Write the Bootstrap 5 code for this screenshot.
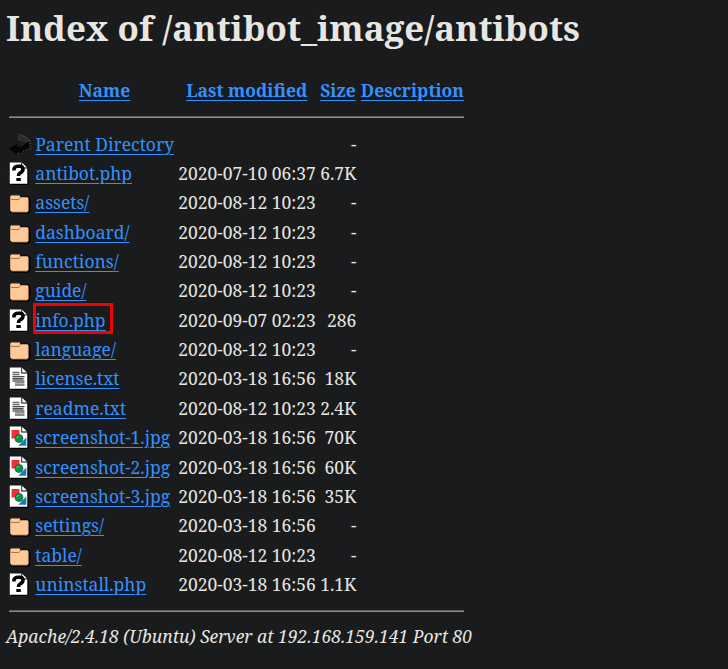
<!DOCTYPE html>
<html lang="en" data-bs-theme="dark">
<head>
<meta charset="utf-8">
<meta name="viewport" content="width=device-width, initial-scale=1">
<title>Index of /antibot_image/antibots</title>
<link href="https://cdn.jsdelivr.net/npm/bootstrap@5.3.0/dist/css/bootstrap.min.css" rel="stylesheet">
<style>
body{background:#1a1b1d;color:#e8e6e1;font-family:"Noto Serif","Droid Serif","DejaVu Serif Condensed","DejaVu Serif",serif;font-size:17.48px;line-height:24px;padding:4px 6px 0;overflow:hidden;white-space:nowrap}
h1{font-size:34.9px;font-weight:700;line-height:48px;color:inherit}
a,a:hover{color:#3391ff;text-decoration:underline;text-decoration-thickness:1px;text-underline-offset:3px}
.listing{width:455px;margin-left:3px}
.heads{padding:26px 0 14px}
.entries{padding:11.07px 0 11.33px}
.entry{height:29.35px}
.c-icon{width:26.3px}.c-name{width:143px}.c-date{width:138px}.c-size{width:40px}.c-desc{width:107.7px}
.heads .c-name{width:142.6px}.heads .c-date{width:137.800px}.heads .c-desc{width:108.3px}
.rule{height:2px;background:linear-gradient(#5c5e60 50%,#8b8b8a 50%)}
.glyph{width:22px;height:24px;display:block;margin-top:2px}
.marked{position:relative}
.marked::after{content:"";position:absolute;left:-2px;top:-5px;width:79.5px;height:31px;border:3px solid #f40000}
.server{margin-top:12px;font-size:17.45px}
</style>
</head>
<body>
<svg class="d-none">
<symbol id="i-back" viewBox="0 0 22 24"><path d="M10 1.500 16 3l5 4v8l-6 4-6 1v2.500L0 15.500 8 11v3l6-1 3-3-7-2z" fill="#040404"/><path d="M10 1.500 16 3l5 4v1.500l-5 1.500-6-2z" fill="#2a2b2d"/><path d="M10 1v7M12 2l4 1.500 4 3.500M21 7.500v8M14 18.500l6-3M9 20v3" stroke="#888" stroke-width=".8" stroke-dasharray="1 1.500" fill="none"/></symbol>
<symbol id="i-page" viewBox="0 0 22 24"><path d="M2 1h12l5.500 6v16H2z" fill="#000"/><path d="M.8.500h11.500V6.500h6v15.200H.8z" fill="#fff"/><path d="M13.200.8 18 5.600h-4.800z" fill="#fff"/></symbol>
<symbol id="i-unknown" viewBox="0 0 22 24"><use href="#i-page"/><path d="M5 8.500V6.700Q6 4.200 9 4.200h2.500Q14 4.500 14 7.500 13.800 9.700 11 11 9.500 12 9.500 14" fill="none" stroke="#000" stroke-width="3.500"/><path d="M7.300 16h4.500v3H7.300z"/></symbol>
<symbol id="i-text" viewBox="0 0 22 24"><use href="#i-page"/><path d="M3.500 5.500h7M3.500 7.700h7M6 15.800h9.500M6 18h9.500" stroke="#666" stroke-width="1.300"/><path d="M3.500 9.800h12M3.500 11.900h11M3.500 14h12" stroke="#111" stroke-width="1.100"/></symbol>
<symbol id="i-image" viewBox="0 0 22 24"><use href="#i-page"/><path d="M2.500 4h8v8.500h-8z" fill="#f12e36"/><path d="M17.300 11.500v8.200h-8z" fill="#1879bf"/><circle cx="10" cy="12.500" r="4" fill="#099444" stroke="#05612b" stroke-width=".7"/><path d="m7.600 12 2-2" stroke="#8fe0a8"/></symbol>
<symbol id="i-folder" viewBox="0 0 22 24"><path d="M2 5.500h17l2.300 2V21l-1.500 1.800H4L1 20.500V6z" fill="#000"/><path d="M2.500 4.200h7.800l1.200 2h7l1 1.200v12.400l-1.200 1.400H3L1.200 19.500v-14z" fill="#ffca98"/><path d="M1.500 7.800 3 8.500h7l1.500-2.200M3 4.400h7" stroke="#96653f" stroke-width=".8" fill="none"/><path d="M3 20.800h15M19.200 9v10.500" stroke="#b17a4d" stroke-width=".9" stroke-dasharray="1 1" fill="none"/></symbol>
</svg>
<h1 class="mb-0">Index of /antibot_image/antibots</h1>
<main class="listing">
<div class="heads d-flex align-items-center fw-bold"><span class="c-icon"></span><span class="c-name text-center"><a href="#" class="me-1">Name</a></span><span class="c-date text-center"><a href="#">Last modified</a></span><span class="c-size text-end"><a href="#">Size</a></span><span class="c-desc text-end"><a href="#">Description</a></span></div>
<div class="rule"></div>
<div id="entries" class="entries"></div>
<div class="rule"></div>
</main>
<footer class="server fst-italic">Apache/2.4.18 (Ubuntu) Server at 192.168.159.141 Port 80</footer>
<script src="https://cdn.jsdelivr.net/npm/bootstrap@5.3.0/dist/js/bootstrap.bundle.min.js"></script>
<script>
const rows=[["back","Parent Directory","","-"],["unknown","antibot.php","2020-07-10 06:37","6.7K"],["folder","assets/","2020-08-12 10:23","-"],["folder","dashboard/","2020-08-12 10:23","-"],["folder","functions/","2020-08-12 10:23","-"],["folder","guide/","2020-08-12 10:23","-"],["unknown","info.php","2020-09-07 02:23","286"],["folder","language/","2020-08-12 10:23","-"],["text","license.txt","2020-03-18 16:56","18K"],["text","readme.txt","2020-08-12 10:23","2.4K"],["image","screenshot-1.jpg","2020-03-18 16:56","70K"],["image","screenshot-2.jpg","2020-03-18 16:56","60K"],["image","screenshot-3.jpg","2020-03-18 16:56","35K"],["folder","settings/","2020-03-18 16:56","-"],["folder","table/","2020-08-12 10:23","-"],["unknown","uninstall.php","2020-03-18 16:56","1.1K"]];
document.getElementById("entries").innerHTML=rows.map(([i,n,d,s])=>`<div class="entry d-flex align-items-center"><span class="c-icon"><svg class="glyph"><use href="#i-${i}"/></svg></span><span class="c-name"><a href="#" class="${n==="info.php"?"marked":""}">${n}</a></span><span class="c-date">${d}</span><span class="c-size text-end">${s}</span></div>`).join("");
</script>
</body>
</html>
